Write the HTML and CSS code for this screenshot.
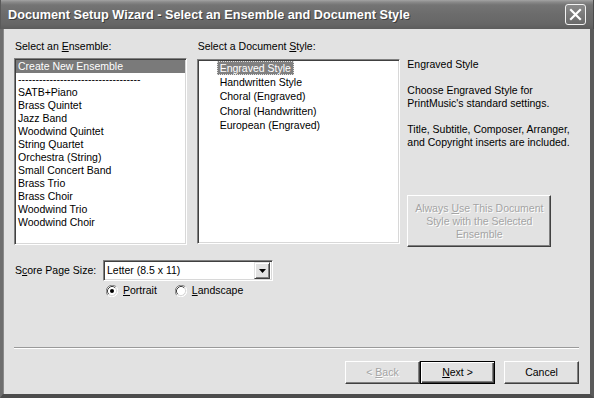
FILE: index.html
```html
<!DOCTYPE html>
<html>
<head>
<meta charset="utf-8">
<link rel="stylesheet" href="styles.css">
</head>
<body>
<div class="window">
  <div class="titlebar">
    <span class="title">Document Setup Wizard - Select an Ensemble and Document Style</span>
    <span class="close">
      <svg width="21" height="21" viewBox="0 0 21 21"><path d="M6 6 L15 15 M15 6 L6 15" stroke="#fff" stroke-width="2.2" stroke-linecap="square"/></svg>
    </span>
  </div>
  <div class="client">
    <div class="toprow">
      <div class="col ens">
        <div class="label">Select an <u>E</u>nsemble:</div>
        <div class="list ens-list">
          <div class="item sel">Create New Ensemble</div>
          <div class="item">-----------------------------------</div>
          <div class="item">SATB+Piano</div>
          <div class="item">Brass Quintet</div>
          <div class="item">Jazz Band</div>
          <div class="item">Woodwind Quintet</div>
          <div class="item">String Quartet</div>
          <div class="item">Orchestra (String)</div>
          <div class="item">Small Concert Band</div>
          <div class="item">Brass Trio</div>
          <div class="item">Brass Choir</div>
          <div class="item">Woodwind Trio</div>
          <div class="item">Woodwind Choir</div>
        </div>
      </div>
      <div class="col sty">
        <div class="label">Select a Document <u>S</u>tyle:</div>
        <div class="list sty-list">
          <div class="titem"><span class="tx tsel">Engraved Style</span></div>
          <div class="titem"><span class="tx">Handwritten Style</span></div>
          <div class="titem"><span class="tx">Choral (Engraved)</span></div>
          <div class="titem"><span class="tx">Choral (Handwritten)</span></div>
          <div class="titem"><span class="tx">European (Engraved)</span></div>
        </div>
      </div>
      <div class="col info">
        <p>Engraved Style</p>
        <p>Choose Engraved Style for<br>PrintMusic's standard settings.</p>
        <p>Title, Subtitle, Composer, Arranger,<br>and Copyright inserts are included.</p>
        <div class="btn disabled big"><span>Always <u>U</u>se This Document<br>Style with the Selected<br>Ensemble</span></div>
      </div>
    </div>
    <div class="sizerow">
      <span class="sizelabel">S<u>c</u>ore Page Size:</span>
      <div class="combo">
        <span class="ctext">Letter (8.5 x 11)</span>
        <span class="cbtn"><svg width="7" height="4" viewBox="0 0 7 4"><path d="M0 0 H7 L3.5 4 Z" fill="#000"/></svg></span>
      </div>
    </div>
    <div class="radiorow">
      <span class="radio">
        <svg width="12" height="12" viewBox="0 0 12 12">
          <circle cx="6" cy="6" r="5" fill="#fff"/>
          <path d="M10.24 1.76 A6 6 0 0 0 1.76 10.24" fill="none" stroke="#808080" stroke-width="1"/>
          <path d="M9.18 2.82 A4.5 4.5 0 0 0 2.82 9.18" fill="none" stroke="#404040" stroke-width="1"/>
          <path d="M10.24 1.76 A6 6 0 0 1 1.76 10.24" fill="none" stroke="#fff" stroke-width="1"/>
          <path d="M9.18 2.82 A4.5 4.5 0 0 1 2.82 9.18" fill="none" stroke="#d8d8d8" stroke-width="1"/>
          <circle cx="6" cy="6" r="2" fill="#000"/>
        </svg>
        <span><u>P</u>ortrait</span>
      </span>
      <span class="radio">
        <svg width="12" height="12" viewBox="0 0 12 12">
          <circle cx="6" cy="6" r="5" fill="#fff"/>
          <path d="M10.24 1.76 A6 6 0 0 0 1.76 10.24" fill="none" stroke="#808080" stroke-width="1"/>
          <path d="M9.18 2.82 A4.5 4.5 0 0 0 2.82 9.18" fill="none" stroke="#404040" stroke-width="1"/>
          <path d="M10.24 1.76 A6 6 0 0 1 1.76 10.24" fill="none" stroke="#fff" stroke-width="1"/>
          <path d="M9.18 2.82 A4.5 4.5 0 0 1 2.82 9.18" fill="none" stroke="#d8d8d8" stroke-width="1"/>
        </svg>
        <span><u>L</u>andscape</span>
      </span>
    </div>
    <div class="sep"></div>
    <div class="buttons">
      <div class="btn disabled"><span>&lt; <u>B</u>ack</span></div>
      <div class="btn default"><span><u>N</u>ext &gt;</span></div>
      <div class="btn cancel"><span>Cancel</span></div>
    </div>
  </div>
</div>
</body>
</html>
```

FILE: styles.css
```css
html, body {
  margin: 0;
  padding: 0;
  background: #e2e2e2;
}
.window {
  width: 594px;
  height: 398px;
  display: flex;
  flex-direction: column;
  font-family: "Liberation Sans", Arial, sans-serif;
  font-size: 10.5px;
  line-height: 13px;
  color: #000;
  box-sizing: border-box;
}
.titlebar {
  height: 29px;
  flex: none;
  display: flex;
  align-items: center;
  justify-content: space-between;
  padding: 0 7px 0 7px;
  background: linear-gradient(to bottom, #a4a4a4 0px, #8a8a8a 2px, #747474 5px, #6c6c6c 14px, #666 24px, #5c5c5c 29px);
  border-left: 1px solid #5a5a5a;
  border-right: 1px solid #4a4a4a;
  box-sizing: border-box;
}
.title {
  color: #fff;
  font-weight: bold;
  font-size: 12.7px;
  text-shadow: 1px 1px 0 #3c3c3c;
  margin-top: 1px;
}
.close {
  width: 21px;
  height: 21px;
  box-sizing: border-box;
  border: 1px solid #f2f2f2;
  border-radius: 3px;
  background: linear-gradient(to bottom, #8a8a8a, #6a6a6a);
  display: flex;
}
.close svg { margin: -1px; }
.client {
  flex: 1;
  display: flex;
  flex-direction: column;
  background: #e2e2e2;
  border-left: 3px solid #6e6e6e;
  border-right: 4px solid #5a5a5a;
  border-bottom: 4px solid #4c4c4c;
  padding: 11px 11px 10px 11px;
  box-shadow: inset 1px 0 0 #8a8a8a;
}
.toprow {
  display: flex;
  align-items: flex-start;
}
.col { display: flex; flex-direction: column; }
.ens { width: 173px; }
.sty { width: 204px; margin-left: 10px; }
.info { margin-left: 7px; padding-top: 18px; width: 172px; }
.label { height: 13px; padding-left: 1px; }
.list {
  background: #fff;
  box-sizing: border-box;
  border-top: 1px solid #808080;
  border-left: 1px solid #808080;
  border-right: 1px solid #fff;
  border-bottom: 1px solid #fff;
  box-shadow: inset 1px 1px 0 #404040, inset -1px -1px 0 #d8d8d8;
  padding: 1px;
  overflow: hidden;
}
.ens-list { height: 187px; margin-top: 5px; }
.sty-list { height: 185px; margin-top: 6px; }
.item {
  height: 13px;
  padding-left: 2px;
  white-space: nowrap;
}
.item.sel { background: #7a7a7a; color: #fff; }
.titem { height: 14.2px; white-space: nowrap; }
.tx {
  display: inline-block;
  margin-left: 18px;
  padding: 0 2px;
  height: 12px;
  line-height: 12px;
  border: 1px solid transparent;
}
.tx.tsel {
  background: #808080;
  color: #fff;
  border: 1px dotted #e0e0e0;
}
.info p { margin: 0 0 13px 0; white-space: nowrap; }
.info p:last-of-type { margin-bottom: 0; }
.btn {
  box-sizing: border-box;
  width: 75px;
  height: 23px;
  display: flex;
  align-items: center;
  justify-content: center;
  text-align: center;
  background: #e2e2e2;
  border-top: 1px solid #fff;
  border-left: 1px solid #fff;
  border-right: 1px solid #404040;
  border-bottom: 1px solid #404040;
  box-shadow: inset -1px -1px 0 #808080;
}
.btn.disabled { color: #a4a4a4; text-shadow: 1px 1px 0 #fff; }
.btn.big {
  width: 144px;
  height: 52px;
  margin-top: 46px;
}
.btn.default {
  border: 1px solid #000;
  box-shadow: inset 1px 1px 0 #fff, inset -1px -1px 0 #404040, inset -2px -2px 0 #808080;
}
.btn.cancel { margin-left: 9px; }
.sizerow {
  display: flex;
  align-items: center;
  margin-top: 13px;
}
.sizelabel { width: 89px; padding-left: 1px; box-sizing: border-box; }
.combo {
  width: 170px;
  height: 21px;
  box-sizing: border-box;
  background: #fff;
  border-top: 1px solid #808080;
  border-left: 1px solid #808080;
  border-right: 1px solid #fff;
  border-bottom: 1px solid #fff;
  box-shadow: inset 1px 1px 0 #404040, inset -1px -1px 0 #d8d8d8;
  display: flex;
  align-items: center;
  justify-content: space-between;
  padding: 2px 2px 2px 3px;
}
.cbtn {
  width: 16px;
  height: 17px;
  box-sizing: border-box;
  background: #e2e2e2;
  border-top: 1px solid #e2e2e2;
  border-left: 1px solid #e2e2e2;
  border-right: 1px solid #404040;
  border-bottom: 1px solid #404040;
  box-shadow: inset 1px 1px 0 #fff, inset -1px -1px 0 #808080;
  display: flex;
  align-items: center;
  justify-content: center;
}
.radiorow {
  display: flex;
  align-items: center;
  margin-top: 3px;
  margin-left: 92px;
  height: 13px;
}
.radio { display: flex; align-items: center; gap: 5px; }
.radio + .radio { margin-left: 18px; }
.radio svg { display: block; }
.sep {
  margin-top: auto;
  height: 1px;
  background: #9a9a9a;
  border-bottom: 1px solid #fff;
}
.buttons {
  display: flex;
  justify-content: flex-end;
  margin-top: 12px;
}
```
